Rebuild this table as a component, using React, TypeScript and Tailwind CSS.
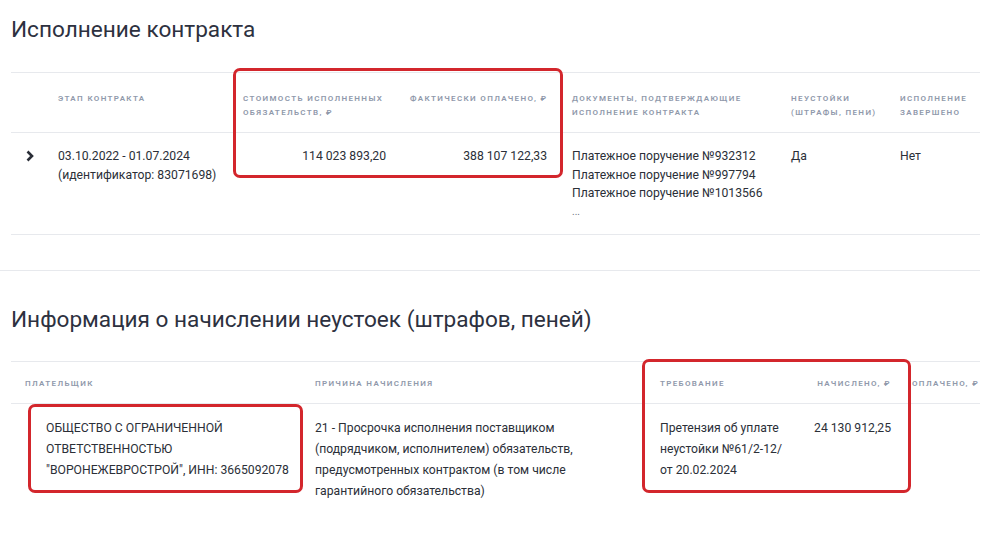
import React from 'react';

const th = 'text-[8px] font-semibold uppercase tracking-[1.35px] leading-[14px] text-[#9099ab]';

const Chevron = () => (
  <svg width="10" height="12" viewBox="0 0 10 12" className="mt-[3px]">
    <polyline points="2.5,1.5 7,6 2.5,10.5" fill="none" stroke="#2a2e37" strokeWidth="2.6" strokeLinejoin="miter" />
  </svg>
);

const Lines = ({ items }: { items: string[] }) => (
  <>
    {items.map((t, i) => (
      <div key={i} className="whitespace-nowrap">{t}</div>
    ))}
  </>
);

function ContractTable() {
  return (
    <div className="w-[969px] ml-[11px] mt-[28px] border-t border-[#e7e9ed]">
      <div className="grid grid-cols-[37px_185px_163px_166px_219px_109px_90px] h-[60px] border-b border-[#e7e9ed] pt-[19px]">
        <div />
        <div className={`pl-[10px] ${th}`}>Этап контракта</div>
        <div className={`pl-[10px] ${th}`}>
          Стоимость исполненных
          <br />
          обязательств, ₽
        </div>
        <div className={`pl-[14px] ${th}`}>Фактически оплачено, ₽</div>
        <div className={`pl-[10px] ${th}`}>
          Документы, подтверждающие
          <br />
          исполнение контракта
        </div>
        <div className={`pl-[10px] ${th}`}>
          Неустойки
          <br />
          (штрафы, пени)
        </div>
        <div className={`pl-[10px] ${th}`}>
          Исполнение
          <br />
          завершено
        </div>
      </div>
      <div className="grid grid-cols-[37px_185px_163px_166px_219px_109px_90px] h-[102px] border-b border-[#e7e9ed] pt-[14px] text-[12.2px] leading-[18.5px] text-[#2b2f38]">
        <div className="pl-[14px]">
          <Chevron />
        </div>
        <div className="pl-[10px]">
          <Lines items={['03.10.2022 - 01.07.2024', '(идентификатор: 83071698)']} />
        </div>
        <div className="pr-[10px] text-right">114 023 893,20</div>
        <div className="pr-[15px] text-right">388 107 122,33</div>
        <div className="pl-[10px]">
          <Lines items={['Платежное поручение №932312', 'Платежное поручение №997794', 'Платежное поручение №1013566']} />
          <div className="text-[10px] text-[#6b7280]">...</div>
        </div>
        <div className="pl-[10px]">Да</div>
        <div className="pl-[10px]">Нет</div>
      </div>
    </div>
  );
}

function PenaltyTable() {
  return (
    <div className="w-[969px] ml-[11px] mt-[27px] border-t border-[#e7e9ed]">
      <div className="grid grid-cols-[294px_345px_150px_101px_79px] h-[42px] border-b border-[#e7e9ed] pt-[15px]">
        <div className={`pl-[14px] ${th}`}>Плательщик</div>
        <div className={`pl-[10px] ${th}`}>Причина начисления</div>
        <div className={`pl-[10px] ${th}`}>Требование</div>
        <div className={`pr-[10px] text-right ${th}`}>Начислено, ₽</div>
        <div className={`pl-[11px] ${th}`}>Оплачено, ₽</div>
      </div>
      <div className="grid grid-cols-[294px_345px_150px_101px_79px] pt-[14px] text-[12.2px] leading-[21px] text-[#2b2f38]">
        <div className="pl-[35px]">
          <Lines items={['ОБЩЕСТВО С ОГРАНИЧЕННОЙ', 'ОТВЕТСТВЕННОСТЬЮ', '"ВОРОНЕЖЕВРОСТРОЙ", ИНН: 3665092078']} />
        </div>
        <div className="pl-[10px]">
          <Lines
            items={[
              '21 - Просрочка исполнения поставщиком',
              '(подрядчиком, исполнителем) обязательств,',
              'предусмотренных контрактом (в том числе',
              'гарантийного обязательства)',
            ]}
          />
        </div>
        <div className="pl-[10px]">
          <Lines items={['Претензия об уплате', 'неустойки №61/2-12/', 'от 20.02.2024']} />
        </div>
        <div className="pr-[10px] text-right">24 130 912,25</div>
        <div />
      </div>
    </div>
  );
}

export default function App() {
  return (
    <div className="relative w-[1005px] h-[550px] overflow-hidden bg-white font-['Roboto',sans-serif]">
      <h1 className="pl-[11px] pt-[16px] text-[22.6px] leading-[28px] font-normal text-[#2d3140]">Исполнение контракта</h1>
      <ContractTable />
      <div className="w-[980px] mt-[35px] border-t border-[#e7e9ed]" />
      <h2 className="pl-[11px] mt-[35px] text-[22.6px] leading-[28px] font-normal text-[#2d3140]">
        Информация о начислении неустоек (штрафов, пеней)
      </h2>
      <PenaltyTable />

      {/* highlight overlays */}
      <div className="absolute left-[233px] top-[68px] w-[330px] h-[110px] rounded-[7px] border-[3px] border-[#d3262c]" />
      <div className="absolute left-[28px] top-[404px] w-[275px] h-[89px] rounded-[7px] border-[3px] border-[#d3262c]" />
      <div className="absolute left-[642px] top-[359px] w-[269px] h-[134px] rounded-[7px] border-[3px] border-[#d3262c]" />
    </div>
  );
}
